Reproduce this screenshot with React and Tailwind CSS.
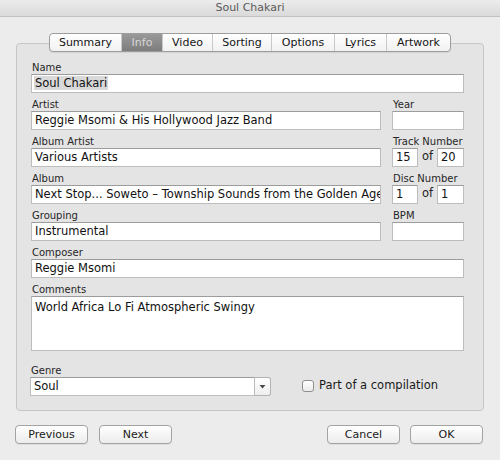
import React from "react";

const font = { fontFamily: '"DejaVu Sans", "Liberation Sans", sans-serif' };

const tabs = [
  { name: "Summary", w: "w-[71px]" },
  { name: "Info", w: "w-[41px]", active: true },
  { name: "Video", w: "w-[50px]" },
  { name: "Sorting", w: "w-[59px]" },
  { name: "Options", w: "w-[63px]" },
  { name: "Lyrics", w: "w-[52px]" },
  { name: "Artwork", w: "w-[64px]" },
];

const Label = ({ children }) => (
  <div className="h-[12px] text-[10px] leading-[12px] text-[#262626] pl-[1px]">{children}</div>
);

const Field = ({ value, className = "", selected }) => (
  <div
    className={`h-[19px] bg-white border border-[#bdbdbd] border-t-[#9c9c9c] pl-[2px] text-[11.5px] leading-[17px] text-[#111] whitespace-nowrap overflow-hidden ${className}`}
  >
    {selected ? <span className="bg-[#d9d9d9] px-[1px]">{value}</span> : <span className="px-[1px]">{value}</span>}
  </div>
);

const NumPair = ({ a, b }) => (
  <div className="flex items-center justify-between">
    <Field value={a} className="w-[26px]" />
    <span className="text-[11.5px] text-[#222] leading-[12px] -mt-[3px]">of</span>
    <Field value={b} className="w-[27px]" />
  </div>
);

const Button = ({ children, className = "" }) => (
  <button
    className={`h-[19px] w-[73px] rounded-[4px] border border-[#a3a3a3] bg-gradient-to-b from-white to-[#ececec] shadow-[0_1px_0_rgba(0,0,0,0.06)] text-[11px] leading-[17px] text-[#1a1a1a] ${className}`}
  >
    {children}
  </button>
);

export default function App() {
  return (
    <div className="w-[500px] h-[460px] bg-[#ececec] flex flex-col overflow-hidden" style={font}>
      <div className="h-[17px] border-b border-[#c2c2c2] bg-gradient-to-b from-[#ececec] to-[#dadada] text-center text-[11px] leading-[16px] text-[#5a5a5a]">
        Soul Chakari
      </div>

      <div className="pl-[16px] pr-[16px] pt-[26px]">
        <div className="relative h-[368px] rounded-[4px] border border-[#c6c6c6] bg-[#e4e4e4] pt-[18px] pl-[14px] pr-[18px]">
          <div className="absolute left-[32px] -top-[11px] flex h-[19px] rounded-[4px] border border-[#9d9d9d] bg-gradient-to-b from-white to-[#f1f1f1] overflow-hidden shadow-[0_1px_1px_rgba(0,0,0,0.08)]">
            {tabs.map((t, i) => (
              <div
                key={t.name}
                className={`${t.w} h-full text-center text-[11px] leading-[17px] ${
                  i > 0 ? "border-l border-[#c9c9c9]" : ""
                } ${t.active ? "bg-gradient-to-b from-[#999] to-[#7d7d7d] text-[#d6d6d6] border-[#8a8a8a]" : "text-[#151515]"}`}
              >
                {t.name}
              </div>
            ))}
          </div>

          <div className="grid grid-cols-[350px_72px] gap-x-[11px] gap-y-[6px]">
            <div className="col-span-2">
              <Label>Name</Label>
              <Field value="Soul Chakari" selected />
            </div>

            <div>
              <Label>Artist</Label>
              <Field value="Reggie Msomi & His Hollywood Jazz Band" />
            </div>
            <div>
              <Label>Year</Label>
              <Field value="" />
            </div>

            <div>
              <Label>Album Artist</Label>
              <Field value="Various Artists" />
            </div>
            <div>
              <Label>Track Number</Label>
              <NumPair a="15" b="20" />
            </div>

            <div>
              <Label>Album</Label>
              <Field value="Next Stop... Soweto – Township Sounds from the Golden Age o" />
            </div>
            <div>
              <Label>Disc Number</Label>
              <NumPair a="1" b="1" />
            </div>

            <div>
              <Label>Grouping</Label>
              <Field value="Instrumental" />
            </div>
            <div>
              <Label>BPM</Label>
              <Field value="" />
            </div>

            <div className="col-span-2">
              <Label>Composer</Label>
              <Field value="Reggie Msomi" />
            </div>

            <div className="col-span-2">
              <Label>Comments</Label>
              <div className="h-[55px] bg-white border border-[#bdbdbd] border-t-[#9c9c9c] px-[3px] pt-[2px] text-[11.5px] leading-[16px] text-[#111]">
                World Africa Lo Fi Atmospheric Swingy
              </div>
            </div>
          </div>

          <div className="mt-[14px] flex items-end">
            <div className="-ml-[1px]">
              <Label>Genre</Label>
              <div className="flex h-[19px] w-[241px]">
                <div className="flex-1 bg-white border border-[#bdbdbd] border-t-[#9c9c9c] pl-[3px] text-[11.5px] leading-[17px] text-[#111]">
                  Soul
                </div>
                <div className="w-[16px] flex items-center justify-center rounded-r-[3px] border border-l-0 border-[#b3b3b3] bg-gradient-to-b from-white to-[#eeeeee]">
                  <svg width="7" height="5" viewBox="0 0 7 5">
                    <path d="M0.5 1 L6.5 1 L3.5 4.5 Z" fill="#4a4a4a" />
                  </svg>
                </div>
              </div>
            </div>
            <div className="ml-[31px] mb-[4px] flex items-center gap-[5px]">
              <div className="w-[12px] h-[12px] rounded-[3px] border border-[#8f8f8f] bg-gradient-to-b from-white to-[#ebebeb]" />
              <span className="text-[11.5px] leading-[13px] text-[#1a1a1a]">Part of a compilation</span>
            </div>
          </div>
        </div>
      </div>

      <div className="mt-[14px] flex items-center pl-[15px] pr-[17px]">
        <Button>Previous</Button>
        <Button className="ml-[11px]">Next</Button>
        <Button className="ml-auto">Cancel</Button>
        <Button className="ml-[10px]">OK</Button>
      </div>
    </div>
  );
}
